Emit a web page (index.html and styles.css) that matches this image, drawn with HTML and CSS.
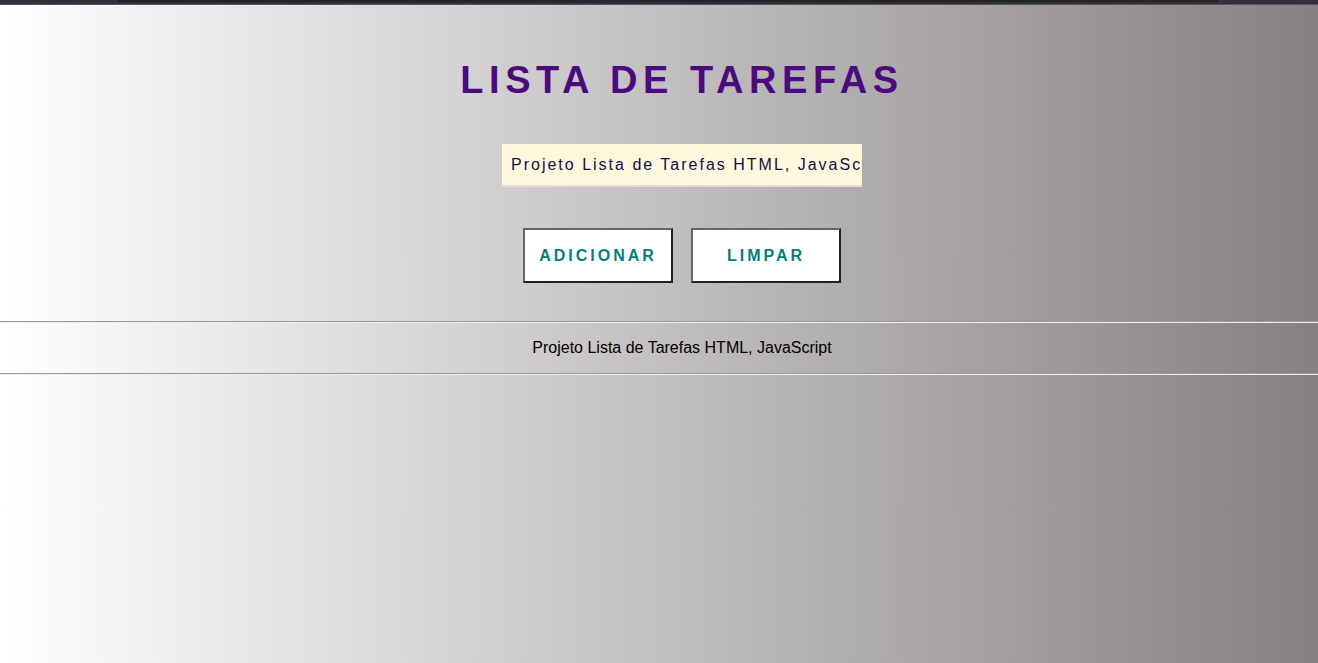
FILE: index.html
```html
<!DOCTYPE html>
<html lang="pt-BR">
<head>
<meta charset="utf-8">
<title>Lista de Tarefas</title>
<link rel="stylesheet" href="styles.css">
</head>
<body>
<div class="topbar"><div class="topbar-inner"></div></div>
<main class="app">
  <h1 class="title">LISTA DE TAREFAS</h1>
  <div class="entry">
    <input class="task-input" type="text" value="Projeto Lista de Tarefas HTML, JavaScript">
  </div>
  <div class="actions">
    <button class="btn" type="button">ADICIONAR</button>
    <button class="btn" type="button">LIMPAR</button>
  </div>
</main>
<hr class="rule">
<p class="footer-text">Projeto Lista de Tarefas HTML, JavaScript</p>
<hr class="rule">
</body>
</html>
```

FILE: styles.css
```css
html, body {
  height: 100%;
}
body {
  margin: 0;
  font-family: "Liberation Sans", Arial, sans-serif;
  background: linear-gradient(to right, #ffffff, #858180);
  overflow: hidden;
}
.topbar {
  height: 5px;
  background: #303136;
  border-bottom: 1px solid #55565a;
  box-sizing: border-box;
  padding: 0 100px 0 118px;
}
.topbar-inner {
  height: 2px;
  background: #222327;
}
.app {
  display: flex;
  flex-direction: column;
  align-items: center;
  padding-left: 46px;
}
.title {
  margin: 52px 0 0;
  height: 45px;
  font-size: 38px;
  line-height: 46px;
  font-weight: bold;
  letter-spacing: 5.6px;
  color: #4b0a80;
}
.entry {
  margin-top: 42px;
}
.task-input {
  display: block;
  box-sizing: border-box;
  width: 360px;
  height: 43px;
  padding: 0 2px 0 9px;
  margin: 0;
  border: none;
  border-bottom: 2px solid #dedede;
  background: #fff8dc;
  font-family: "Liberation Sans", Arial, sans-serif;
  font-size: 16px;
  letter-spacing: 2px;
  color: #10104a;
  outline: none;
}
.actions {
  display: flex;
  gap: 18px;
  margin-top: 41px;
}
.btn {
  box-sizing: border-box;
  width: 150px;
  height: 55px;
  background: #ffffff;
  border: 2px solid;
  border-color: #666666 #222222 #222222 #666666;
  font-family: "Liberation Sans", Arial, sans-serif;
  font-size: 16px;
  font-weight: bold;
  letter-spacing: 3px;
  color: #008080;
  padding: 0;
}
.rule {
  margin: 38px 0 0;
  border: 0;
  border-top: 1px solid #9a9a9a;
  border-bottom: 1px solid #eeeeee;
  height: 0;
}
.footer-text {
  margin: 16px 0 16px;
  padding-left: 46px;
  text-align: center;
  font-size: 16px;
  line-height: 18px;
  color: #000000;
}
.footer-text + .rule {
  margin-top: 0;
}
```
